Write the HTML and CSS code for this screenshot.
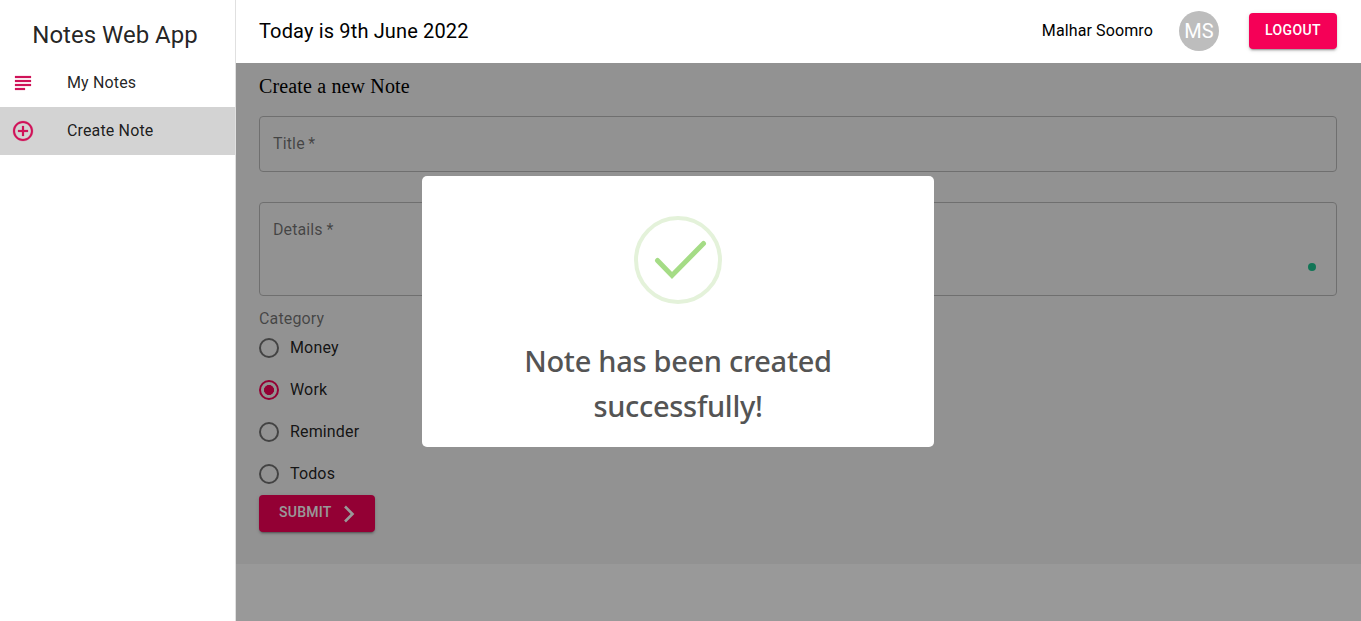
FILE: index.html
```html
<!DOCTYPE html>
<html lang="en">
<head>
<meta charset="utf-8">
<title>Notes Web App</title>
<link rel="stylesheet" href="styles.css">
</head>
<body>
<div class="app">
  <aside class="sidebar">
    <h1 class="brand">Notes Web App</h1>
    <nav>
      <a class="nav-item">
        <svg class="icon pink" viewBox="0 0 24 24"><path d="M4 5h16v2H4zM4 9h16v2H4zM4 13h16v2H4zM4 17h10v2H4z"/></svg>
        <span>My Notes</span>
      </a>
      <a class="nav-item active">
        <svg class="icon pink" viewBox="0 0 24 24"><path d="M13 7h-2v4H7v2h4v4h2v-4h4v-2h-4V7zm-1-5C6.48 2 2 6.48 2 12s4.48 10 10 10 10-4.48 10-10S17.520 2 12 2zm0 18c-4.410 0-8-3.590-8-8s3.590-8 8-8 8 3.590 8 8-3.590 8-8 8z"/></svg>
        <span>Create Note</span>
      </a>
    </nav>
  </aside>
  <div class="page">
    <header class="topbar">
      <p class="date">Today is 9th June 2022</p>
      <p class="user">Malhar Soomro</p>
      <div class="avatar">MS</div>
      <button class="btn logout">LOGOUT</button>
    </header>
    <main class="main">
      <form class="form">
        <h2 class="heading">Create a new Note</h2>
        <div class="field title">Title&thinsp;*</div>
        <div class="field details">Details *<span class="dot"></span></div>
        <div class="legend">Category</div>
        <label class="option"><span class="radio"></span>Money</label>
        <label class="option"><span class="radio checked"></span>Work</label>
        <label class="option"><span class="radio"></span>Reminder</label>
        <label class="option"><span class="radio"></span>Todos</label>
        <button type="button" class="btn submit"><span>SUBMIT</span>
          <svg class="chevron" viewBox="0 0 20 20"><path d="M6 2.500l7.500 7.500L6 17.500" fill="none" stroke="currentColor" stroke-width="2.600"/></svg>
        </button>
      </form>
      <div class="overlay"></div>
    </main>
  </div>
</div>
<div class="modal">
  <svg class="success" viewBox="0 0 88 88" fill="none">
    <circle cx="44" cy="44" r="42" stroke="#e4f2da" stroke-width="4"/>
    <path d="M23.500 44.500L38 59.500L69.500 27.500" stroke="#a5dc86" stroke-width="5" stroke-linecap="round"/>
  </svg>
  <p class="message">Note has been created<br>successfully!</p>
</div>
</body>
</html>
```
FILE: styles.css
```css
* { box-sizing: border-box; }
body { margin: 0; background: #fff; color: rgba(0,0,0,.87); font: 400 16px/24px Roboto, sans-serif; letter-spacing: .15px; overflow: hidden; }
h1, h2, p { margin: 0; font-weight: 400; }
.app { display: flex; height: 621px; }
.sidebar { width: 236px; flex: none; border-right: 1px solid #e0e0e0; }
.brand { height: 59px; padding-top: 19px; font-size: 24px; line-height: 32px; text-align: center; padding-right: 5px; letter-spacing: 0; }
.nav-item { display: flex; align-items: center; height: 48px; padding: 0 0 0 11px; gap: 32px; }
.active { background: #d3d3d3; }
.icon { width: 24px; height: 24px; }
.pink { fill: #d01259; stroke: #d01259; stroke-width: .2; }
.page { flex: 1; display: flex; flex-direction: column; }
.topbar { height: 63px; display: flex; align-items: center; padding: 0 24px 1px 23px; color: #000; }
.date { flex: 1; font-size: 20px; letter-spacing: .15px; }
.user { margin-right: 26px; padding-bottom: 1px; letter-spacing: .12px; }
.avatar { width: 40px; height: 40px; margin-right: 30px; border-radius: 50%; background: #bdbdbd; color: #fff; font-size: 20px; line-height: 41px; text-align: center; }
.btn { display: flex; align-items: center; border: 0; border-radius: 4px; background: #f50057; color: #fff; font: 500 14px/24px Roboto, sans-serif; letter-spacing: .38px; box-shadow: 0 3px 1px -2px rgba(0,0,0,.2), 0 2px 2px rgba(0,0,0,.14), 0 1px 5px rgba(0,0,0,.12); }
.logout { width: 88px; height: 36px; justify-content: center; padding: 0 0 2px; }
.main { flex: 1; position: relative; }
.form { height: 501px; padding: 11px 24px 0 23px; background: #f4f4f4; }
.heading { height: 42px; color: #000; font: 400 20px/24px "Liberation Serif", serif; letter-spacing: .15px; }
.field { border: 1px solid #bababa; border-radius: 4px; padding: 15px 13px; color: rgba(0,0,0,.54); }
.title { height: 56px; margin-bottom: 30px; }
.details { height: 94px; position: relative; letter-spacing: .08px; }
.dot { position: absolute; right: 20px; bottom: 24px; width: 8px; height: 8px; border-radius: 50%; background: #1dc48f; }
.legend { height: 31px; padding-top: 11px; color: rgba(0,0,0,.54); }
.option { display: flex; align-items: center; height: 42px; gap: 11px; color: rgba(0,0,0,.87); }
.radio { width: 20px; height: 20px; border: 2px solid #717171; border-radius: 50%; }
.checked { border-color: #f50057; background: radial-gradient(circle, #f50057 4.700px, transparent 5.300px); }
.submit { width: 116px; height: 37px; padding: 0 15px 2px 20px; gap: 7px; letter-spacing: .25px; }
.submit span { padding-bottom: 2px; }
.chevron { width: 20px; height: 20px; position: relative; top: 1px; }
.overlay { position: absolute; inset: 0; background: rgba(0,0,0,.4); }
.modal { position: absolute; left: 422px; top: 176px; width: 512px; height: 271px; border-radius: 5px; background: #fff; display: flex; flex-direction: column; align-items: center; padding-top: 40px; }
.success { width: 88px; height: 88px; }
.message { margin-top: 34px; color: #545454; font: 500 29px/45px "Noto Sans", sans-serif; text-align: center; letter-spacing: -.3px; }
```
